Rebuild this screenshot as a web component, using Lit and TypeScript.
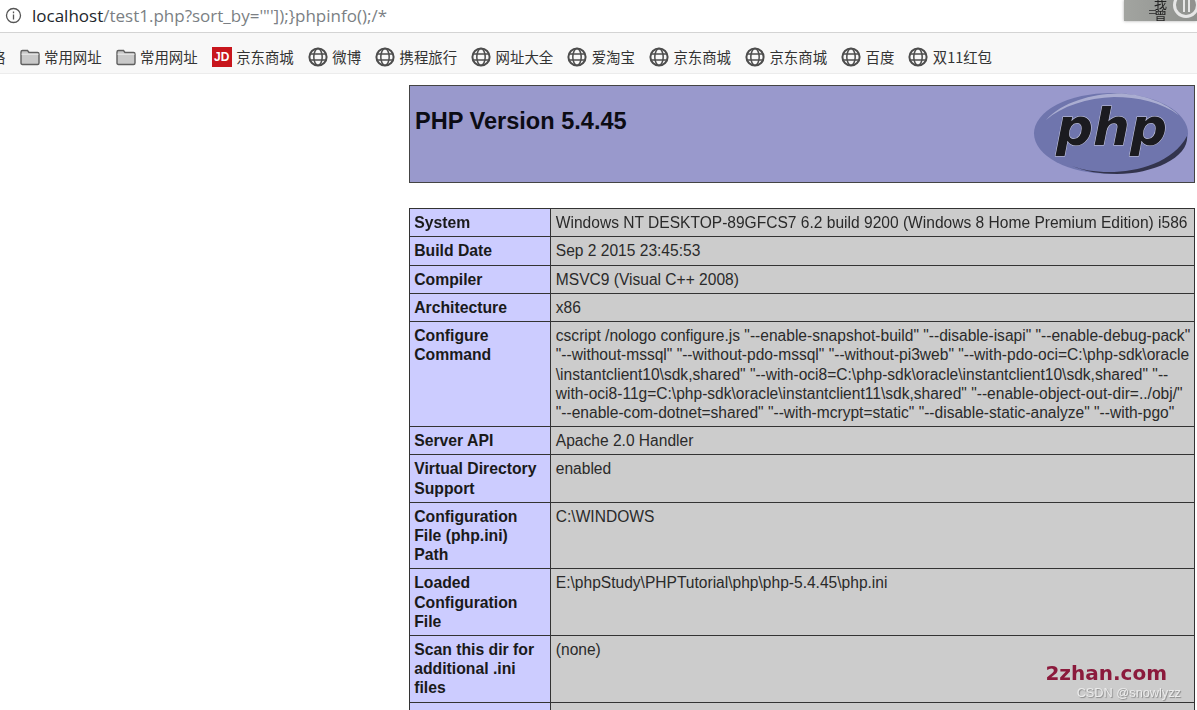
import { LitElement, html, css, svg } from "lit";
import { customElement } from "lit/decorators.js";

type Mark = "folder" | "jd" | "globe";
const bookmarks: { icon: Mark; label: string }[] = [
  { icon: "folder", label: "常用网址" },
  { icon: "folder", label: "常用网址" },
  { icon: "jd", label: "京东商城" },
  { icon: "globe", label: "微博" },
  { icon: "globe", label: "携程旅行" },
  { icon: "globe", label: "网址大全" },
  { icon: "globe", label: "爱淘宝" },
  { icon: "globe", label: "京东商城" },
  { icon: "globe", label: "京东商城" },
  { icon: "globe", label: "百度" },
  { icon: "globe", label: "双11红包" },
];

const rows: [string[], string[]][] = [
  [["System"], ["Windows NT DESKTOP-89GFCS7 6.2 build 9200 (Windows 8 Home Premium Edition) i586"]],
  [["Build Date"], ["Sep 2 2015 23:45:53"]],
  [["Compiler"], ["MSVC9 (Visual C++ 2008)"]],
  [["Architecture"], ["x86"]],
  [
    ["Configure", "Command"],
    [
      'cscript /nologo configure.js "--enable-snapshot-build" "--disable-isapi" "--enable-debug-pack"',
      '"--without-mssql" "--without-pdo-mssql" "--without-pi3web" "--with-pdo-oci=C:\\php-sdk\\oracle',
      '\\instantclient10\\sdk,shared" "--with-oci8=C:\\php-sdk\\oracle\\instantclient10\\sdk,shared" "--',
      'with-oci8-11g=C:\\php-sdk\\oracle\\instantclient11\\sdk,shared" "--enable-object-out-dir=../obj/"',
      '"--enable-com-dotnet=shared" "--with-mcrypt=static" "--disable-static-analyze" "--with-pgo"',
    ],
  ],
  [["Server API"], ["Apache 2.0 Handler"]],
  [["Virtual Directory", "Support"], ["enabled"]],
  [["Configuration", "File (php.ini)", "Path"], ["C:\\WINDOWS"]],
  [["Loaded", "Configuration", "File"], ["E:\\phpStudy\\PHPTutorial\\php\\php-5.4.45\\php.ini"]],
  [["Scan this dir for", "additional .ini", "files"], ["(none)"]],
  [["\u00a0"], ["\u00a0"]],
];

const icons = {
  folder: svg`<svg class="ic" viewBox="0 0 20 20" width="20" height="20"><path d="M1 5q0-1.5 1.5-1.5h5l1.5 2h8.5q1.5 0 1.5 1.5v9q0 1.5-1.5 1.5h-15q-1.5 0-1.5-1.5z" fill="#c9c9c9" stroke="#5f5f5f" stroke-width="1.4"/><path d="M1.5 7.2h17" stroke="#eeeeee" fill="none"/></svg>`,
  jd: svg`<svg class="ic" viewBox="0 0 20 20" width="20" height="20"><rect width="20" height="20" fill="#c8161d"/></svg>`,
  globe: svg`<svg class="ic" viewBox="0 0 20 20" width="20" height="20" fill="none" stroke="#4d4d4d"><circle cx="10" cy="10" r="8.6" stroke-width="2"/><ellipse cx="10" cy="10" rx="4.2" ry="8.4" stroke-width="1.5"/><path d="M2 7h16M2 13h16" stroke-width="1.5"/></svg>`,
};

@customElement("app-root")
export class AppRoot extends LitElement {
  static styles = css`
    :host { display: block; width: 1197px; height: 710px; overflow: hidden; background: #fff; position: relative; }
    .soft { filter: blur(0.35px); height: 710px; display: flex; flex-direction: column; }
    .urlbar { height: 33px; box-sizing: border-box; display: flex; align-items: center; padding: 0 0 2px 5px; gap: 10px; background: #fff; border-bottom: 1px solid #d4d4d4; font: 17px "Open Sans", "Liberation Sans", sans-serif; flex: none; }
    .info { flex: none; }
    .host { color: #22262c; }
    .path { color: #7b7f84; }
    .bookmarks { height: 41px; box-sizing: border-box; background: #f8f8f8; border-bottom: 1px solid #ececec; display: flex; align-items: center; padding-top: 7px; gap: 14px; font: 14.4px "Noto Sans CJK SC", sans-serif; color: #333; white-space: nowrap; overflow: hidden; flex: none; }
    .cut { width: 5.5px; overflow: hidden; direction: rtl; flex: none; }
    .mark { display: flex; align-items: center; gap: 4.5px; }
    .ic { flex: none; }
    .jdwrap { position: relative; width: 20px; height: 20px; }
    .jdtext { position: absolute; inset: 0; color: #fff; font: bold 12px/20px "Liberation Sans", sans-serif; text-align: center; }
    .page { flex: 1; padding: 11px 2px 0 409px; font-family: "Liberation Sans", Arial, sans-serif; color: #000; }
    .head { height: 98px; box-sizing: border-box; background: #9999cc; border: 1px solid #444; display: flex; justify-content: space-between; align-items: flex-start; }
    .head h1 { margin: 0; padding: 20px 0 0 5px; font: bold 23.55px/30px "Liberation Sans", sans-serif; color: #0c0c14; }
    .logo { margin: 6px 2px 0 0; }
    .table { margin-top: 25px; display: grid; grid-template-columns: 141px 1fr; border: 1px solid #333; border-bottom: 0; font-size: 15.57px; line-height: 19.12px; }
    .k, .v { padding: 4.1px 0; border-bottom: 1px solid #333; white-space: nowrap; overflow: hidden; }
    .k { padding-left: 4.2px; background: #ccccff; font-weight: bold; font-size: 15.75px; color: #1a1a1a; border-right: 1px solid #333; }
    .v { padding-left: 4.8px; background: #cccccc; color: #2a2a2a; }
    .line { display: block; }
    .thumb { position: absolute; top: 0; right: 0; width: 73px; height: 21px; background: linear-gradient(90deg, #a2a4a0, #8f918e); box-shadow: 0 0 3px #aaa; overflow: hidden; }
    .thumb span { position: absolute; left: 30px; top: -3px; font: 13px/12px "Noto Sans CJK SC", serif; color: #222; width: 14px; }
    .thumb::before { content: ""; position: absolute; left: 25px; top: 10px; width: 7px; height: 6px; background: repeating-linear-gradient(#444 0 1px, transparent 1px 3px); }
    .thumb .ring { position: absolute; left: 49px; top: -8px; width: 26px; height: 26px; box-sizing: border-box; border: 3px solid #e6e6e6; border-radius: 50%; }
    .thumb .ring::after { content: ""; position: absolute; left: 7px; top: 4px; width: 3px; height: 13px; border-left: 2px solid #e6e6e6; border-right: 2px solid #e6e6e6; }
    .wm { position: absolute; right: 30px; top: 661px; font: bold 20px/24px "DejaVu Sans", sans-serif; color: #8b1a3c; }
    .csdn { position: absolute; right: 16px; top: 686px; font: 12.75px/14px "Liberation Sans", sans-serif; color: #ececec; text-shadow: 1px 1px 1px #8a8a8a; }
  `;

  renderMark(icon: Mark) {
    if (icon === "jd") {
      return html`<span class="jdwrap">${icons.jd}<span class="jdtext">JD</span></span>`;
    }
    return icons[icon];
  }

  render() {
    return html`
      <div class="soft">
        <div class="urlbar">
          <svg class="info" width="17" height="17" viewBox="0 0 17 17" fill="none" stroke="#555" stroke-width="1.3"><circle cx="8.5" cy="8.5" r="7"/><path d="M8.5 7.5v5M8.5 4.6v1.6"/></svg>
          <div><span class="host">localhost</span><span class="path">/test1.php?sort_by='"']);}phpinfo();/*</span></div>
        </div>
        <div class="bookmarks">
          <span class="cut">络</span>
          ${bookmarks.map((b) => html`<span class="mark">${this.renderMark(b.icon)}<span>${b.label}</span></span>`)}
        </div>
        <div class="page">
          <div class="head">
            <h1>PHP Version 5.4.45</h1>
            <svg class="logo" width="160" height="84" viewBox="0 0 160 84">
              <ellipse cx="79" cy="41.5" rx="77" ry="40.5" fill="#6f75ad"/>
              <path d="M14 28C30 10 60 2 85 1.5c25 0 50 9 62 22C130 10 105 5 82 5 55 6 30 14 14 28z" fill="#c3c5e0" opacity=".7"/>
              <path d="M40 74c30 12 95 8 115-30 2 22-35 38-70 38-18 0-33-3-45-8z" fill="#33344d"/>
              <text x="24" y="53" font-family="DejaVu Sans" font-style="italic" font-weight="bold" font-size="52" textLength="111" lengthAdjust="spacingAndGlyphs" fill="#1b1b20" stroke="#c9cbe2" stroke-width="1" paint-order="stroke">php</text>
            </svg>
          </div>
          <div class="table">
            ${rows.map(
              ([k, v]) => html`
                <div class="k">${k.map((l) => html`<span class="line">${l}</span>`)}</div>
                <div class="v">${v.map((l) => html`<span class="line">${l}</span>`)}</div>
              `
            )}
          </div>
        </div>
      </div>
      <div class="thumb"><span>我曾</span><i class="ring"></i></div>
      <div class="wm">2zhan.com</div>
      <div class="csdn">CSDN @snowlyzz</div>
    `;
  }
}
